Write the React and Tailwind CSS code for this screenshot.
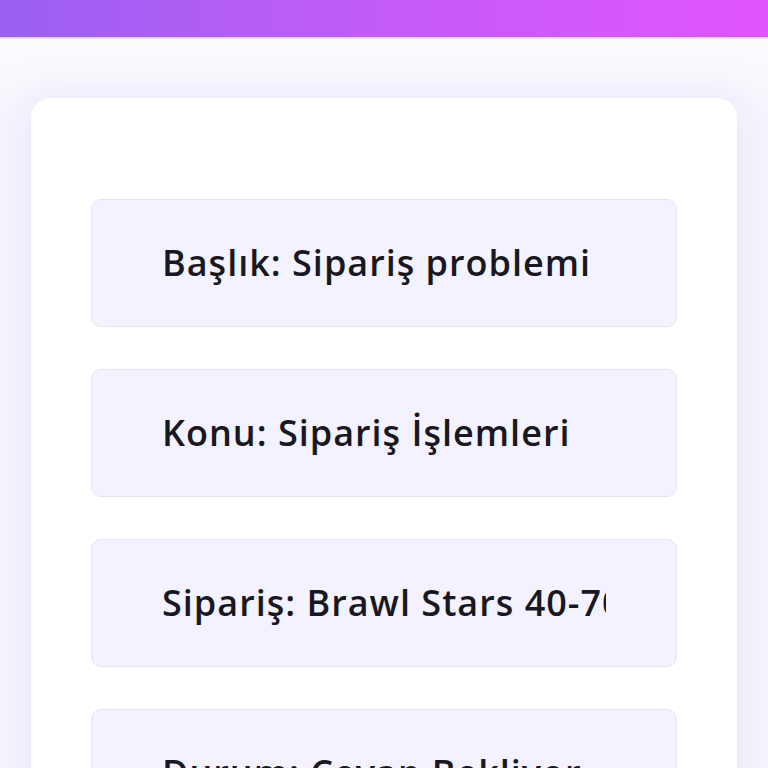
import React from 'react';

const rows = [
  'Başlık: Sipariş problemi',
  'Konu: Sipariş İşlemleri',
  'Sipariş: Brawl Stars 40-70 Elmas',
  'Durum: Cevap Bekliyor',
];

const App = () => {
  return (
    <div className="min-h-screen bg-gradient-to-b from-white to-[#f6f5fd] to-[120px] font-['Open_Sans','Noto_Sans',sans-serif]">
      <div className="h-[37px] bg-gradient-to-r from-[#9a60f1] via-[#c35bf7] to-[#e155fc] shadow-[0_1px_2px_rgba(190,90,240,0.5)]" />
      <div className="px-[31px] pt-[61px]">
        <div className="bg-white rounded-[20px] shadow-[0_0_40px_rgba(200,195,240,0.35)] px-[60px] pt-[101px] pb-10">
          <div className="flex flex-col gap-[42px]">
            {rows.map((text) => (
              <div
                key={text}
                className="h-[128px] flex items-center rounded-[10px] border border-[#e5e4f1] bg-[#f3f2fe] px-[70px]"
              >
                <div className="overflow-hidden whitespace-nowrap text-[36px] leading-[54px] font-semibold text-[#181722] tracking-[1px]">
                  {text}
                </div>
              </div>
            ))}
          </div>
        </div>
      </div>
    </div>
  );
};

export default App;
